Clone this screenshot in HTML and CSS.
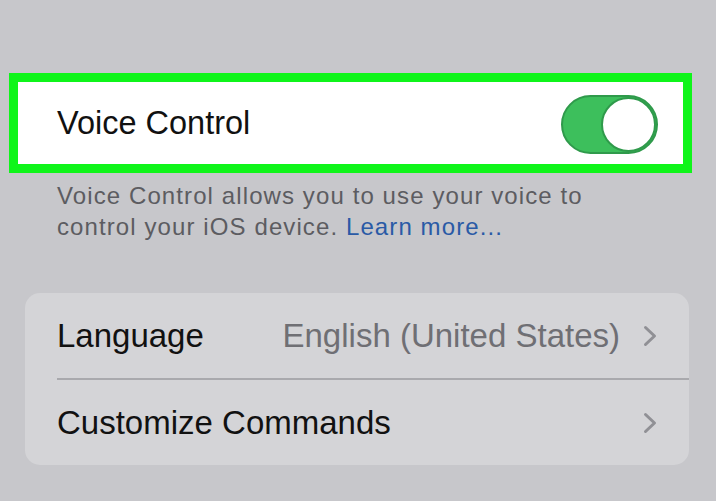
FILE: index.html
```html
<!DOCTYPE html>
<html lang="en">
<head>
    <meta charset="UTF-8">
    <meta name="viewport" content="width=device-width, initial-scale=1.0">
    <title>Voice Control</title>
    <link rel="stylesheet" href="styles.css">
</head>
<body>
    <div class="highlight">
        <div class="toggle-cell">
            <span class="cell-label">Voice Control</span>
            <div class="switch on">
                <div class="knob"></div>
            </div>
        </div>
    </div>

    <p class="footer-note">
        Voice Control allows you to use your voice to<br>
        control your iOS device. <a href="#">Learn more...</a>
    </p>

    <div class="group">
        <div class="row">
            <span class="cell-label">Language</span>
            <span class="row-value">English (United States)</span>
            <svg class="chevron" width="14" height="22" viewBox="0 0 14 22">
                <path d="M2.5 2.5 L11.5 11 L2.5 19.5" fill="none" stroke="#909095" stroke-width="3" stroke-linecap="round" stroke-linejoin="round"/>
            </svg>
        </div>
        <div class="row">
            <span class="cell-label">Customize Commands</span>
            <span class="row-value"></span>
            <svg class="chevron" width="14" height="22" viewBox="0 0 14 22">
                <path d="M2.5 2.5 L11.5 11 L2.5 19.5" fill="none" stroke="#909095" stroke-width="3" stroke-linecap="round" stroke-linejoin="round"/>
            </svg>
        </div>
    </div>
</body>
</html>
```

FILE: styles.css
```css
body {
    font-family: "Liberation Sans", Arial, sans-serif;
    background-color: #c7c7cb;
    margin: 0;
    padding-top: 73px;
    height: 428px;
    overflow: hidden;
}
.highlight {
    margin-left: 9px;
    width: 665px;
    border: 9px solid #0ff51a;
}
.toggle-cell {
    display: flex;
    align-items: center;
    justify-content: space-between;
    height: 82px;
    padding: 0 25px 0 39px;
    background-color: #ffffff;
}
.cell-label {
    font-size: 32.5px;
    color: #111111;
}
.row .cell-label {
    font-size: 33px;
}
.switch {
    width: 97px;
    height: 59px;
    box-sizing: border-box;
    border-radius: 30px;
    background-color: #3dbf5c;
    border: 2px solid #2f9a4b;
    display: flex;
    justify-content: flex-end;
    margin-top: 2px;
}
.knob {
    width: 55px;
    height: 55px;
    box-sizing: border-box;
    border-radius: 50%;
    background-color: #ffffff;
    border: 2px solid #2f9a4b;
}
.footer-note {
    margin: 0 0 0 57px;
    padding-top: 7px;
    font-size: 24px;
    letter-spacing: 1.1px;
    line-height: 31px;
    color: #5c5c61;
}
.footer-note a {
    color: #2a5aa6;
    text-decoration: none;
}
.group {
    margin: 51px 0 0 25px;
    width: 664px;
    border-radius: 15px;
    background-color: #d4d4d7;
    overflow: hidden;
}
.row {
    display: flex;
    align-items: center;
    height: 85px;
    margin-left: 32px;
    padding-right: 32px;
}
.row + .row {
    border-top: 2px solid #a9a9ad;
}
.row-value {
    flex: 1;
    text-align: right;
    font-size: 33px;
    color: #6f6f74;
    margin-right: 23px;
}
.chevron {
    display: block;
}
```
